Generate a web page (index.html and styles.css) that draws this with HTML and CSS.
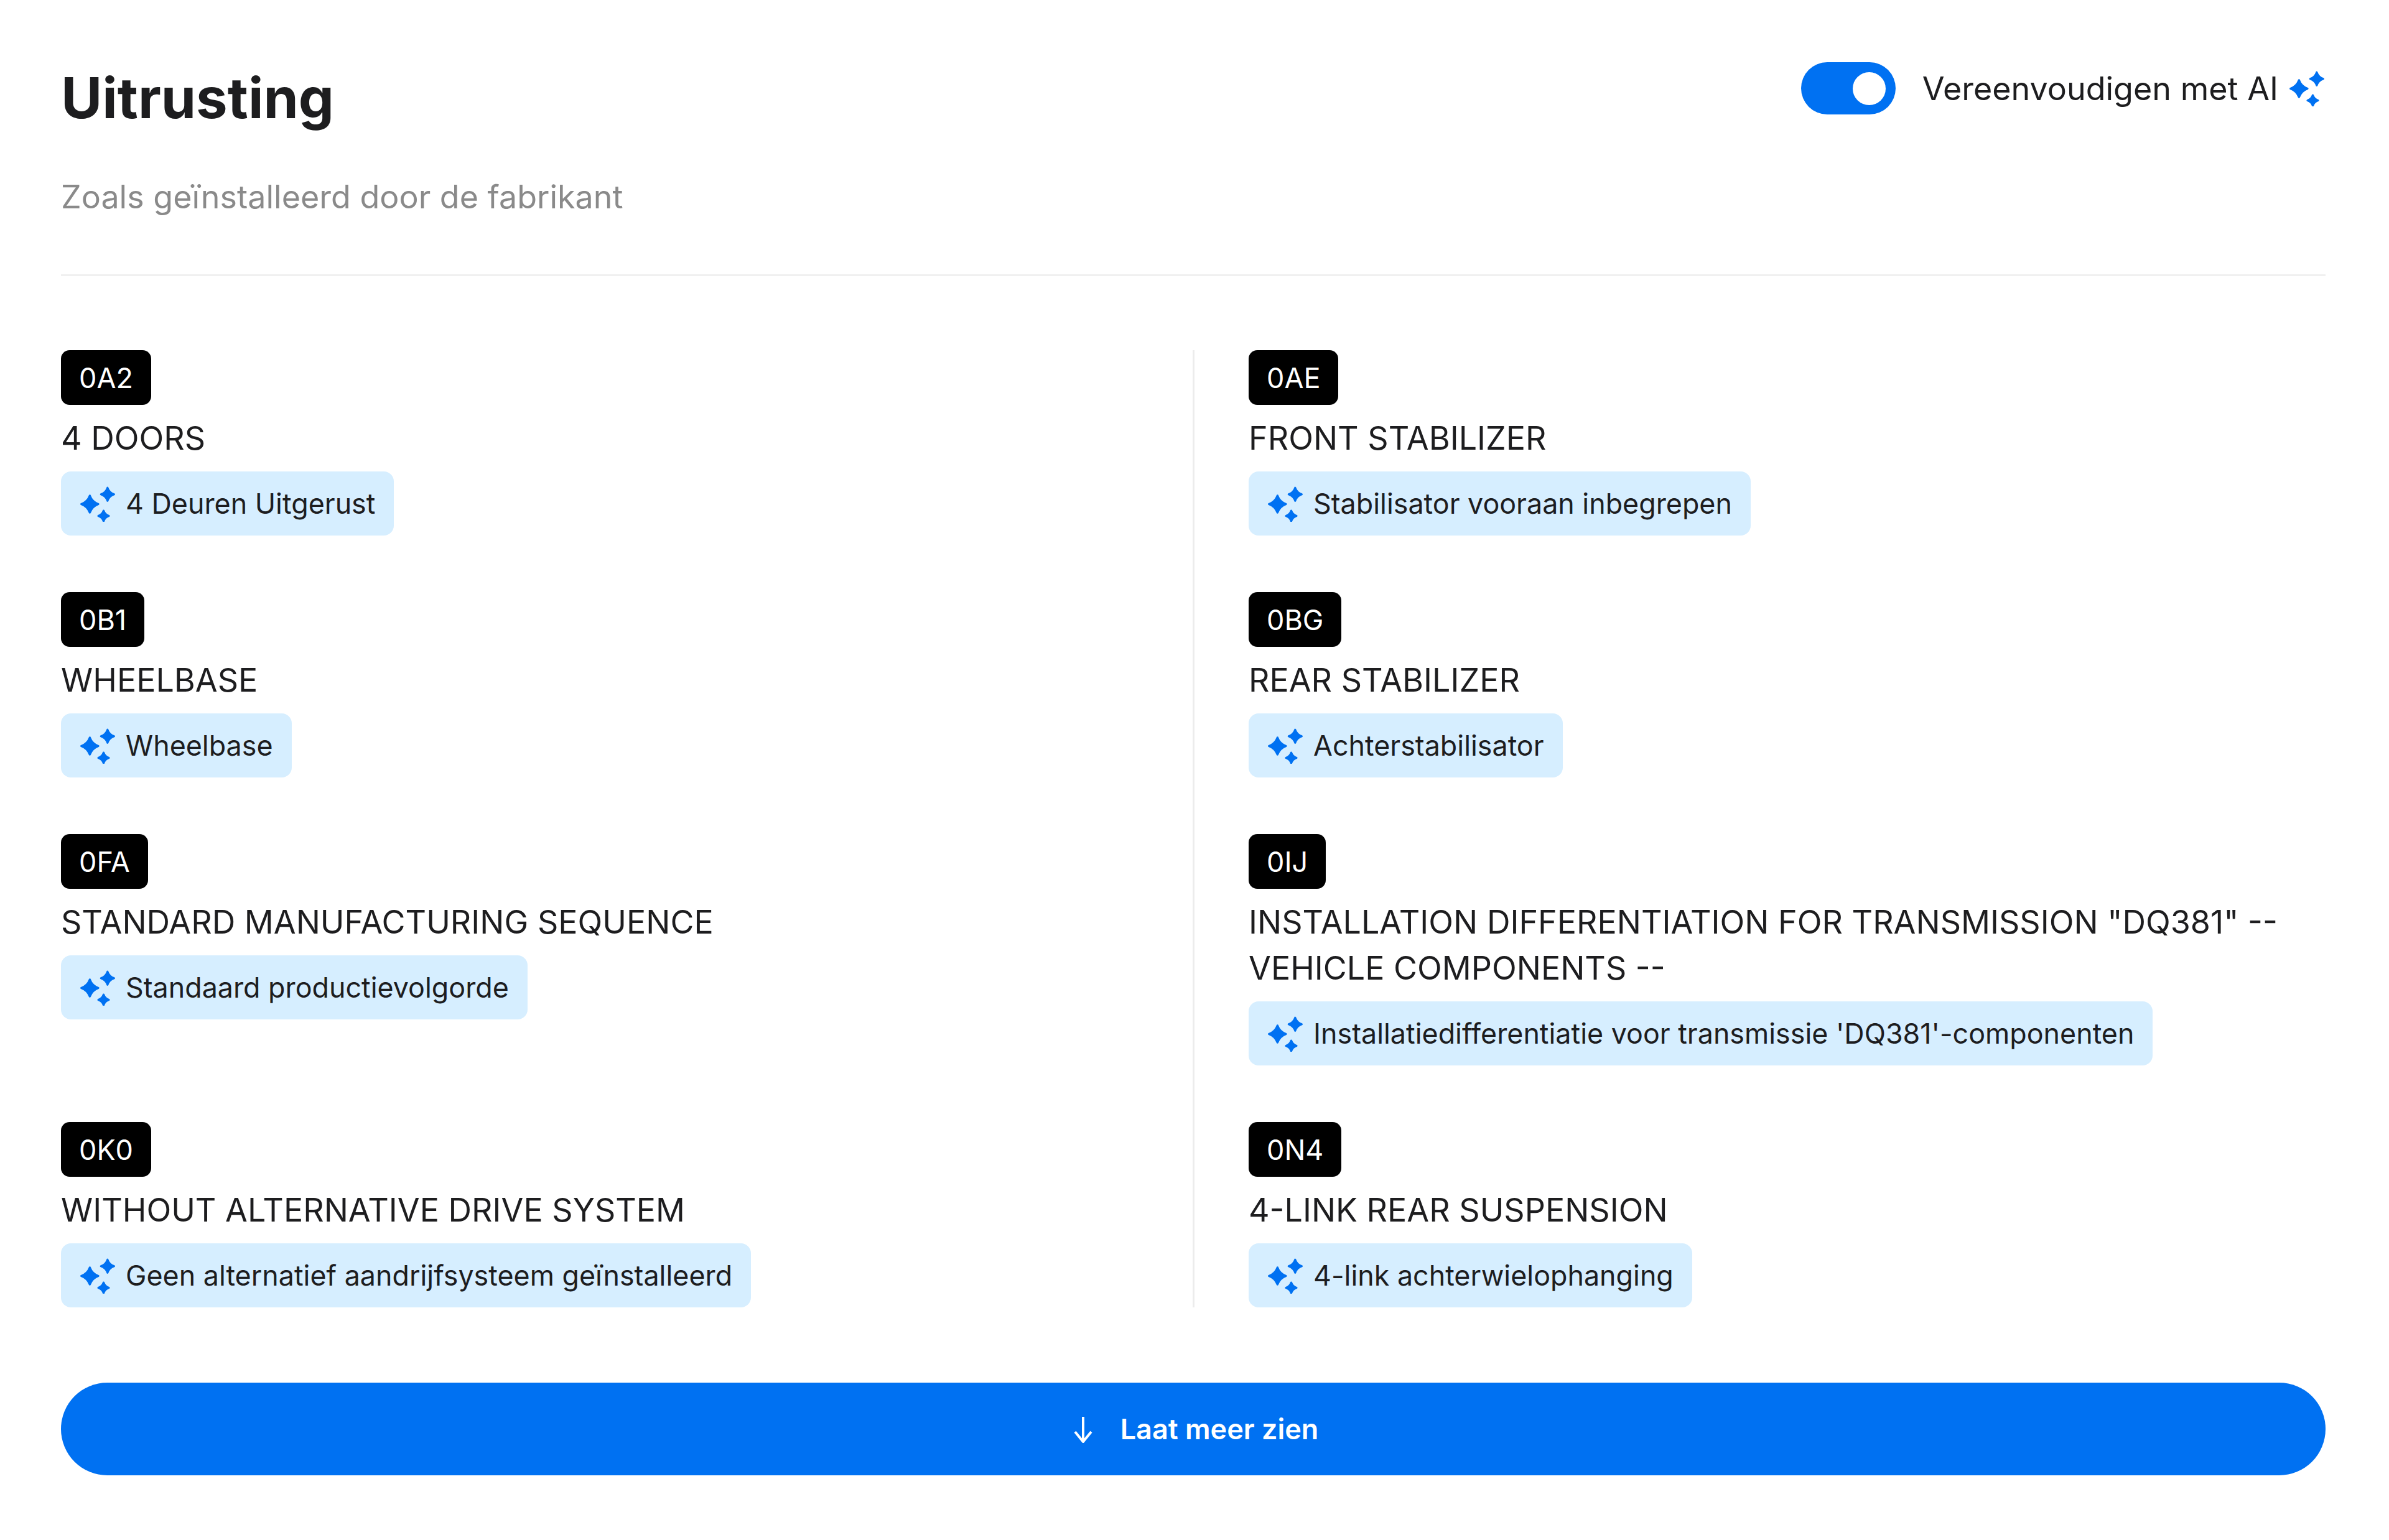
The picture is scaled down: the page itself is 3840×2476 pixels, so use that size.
FILE: index.html
```html
<!DOCTYPE html>
<html lang="nl">
<head>
   <meta charset="UTF-8">
   <meta name="viewport" content="width=device-width, initial-scale=1.0">
   <title>Uitrusting</title>
   <link rel="stylesheet" href="styles.css">
</head>
<body>
   <svg class="defs" width="0" height="0">
      <symbol id="sparkle" viewBox="0 0 54 55">
         <path d="M15 15 Q18.5 24.5 28 28 Q18.5 31.5 15 41 Q11.5 31.5 2 28 Q11.5 24.5 15 15Z"/>
         <path d="M42 3 Q44.5 10.5 52 13 Q44.5 15.5 42 23 Q39.5 15.5 32 13 Q39.5 10.5 42 3Z"/>
         <path d="M36 38 Q38 44 44 46 Q38 48 36 54 Q34 48 28 46 Q34 44 36 38Z"/>
      </symbol>
   </svg>

   <div class="container">
      <div class="header">
         <div class="heading">
            <h1>Uitrusting</h1>
            <p class="subtitle">Zoals geïnstalleerd door de fabrikant</p>
         </div>
         <div class="ai-toggle">
            <span class="switch"><span class="knob"></span></span>
            <span class="ai-label">Vereenvoudigen met AI</span>
            <svg class="sparkle"><use href="#sparkle"/></svg>
         </div>
      </div>

      <div class="items">
         <div class="item">
            <span class="code">0A2</span>
            <div class="name">4 DOORS</div>
            <div class="chip"><svg class="sparkle"><use href="#sparkle"/></svg>4 Deuren Uitgerust</div>
         </div>
         <div class="item">
            <span class="code">0AE</span>
            <div class="name">FRONT STABILIZER</div>
            <div class="chip"><svg class="sparkle"><use href="#sparkle"/></svg>Stabilisator vooraan inbegrepen</div>
         </div>
         <div class="item">
            <span class="code">0B1</span>
            <div class="name">WHEELBASE</div>
            <div class="chip"><svg class="sparkle"><use href="#sparkle"/></svg>Wheelbase</div>
         </div>
         <div class="item">
            <span class="code">0BG</span>
            <div class="name">REAR STABILIZER</div>
            <div class="chip"><svg class="sparkle"><use href="#sparkle"/></svg>Achterstabilisator</div>
         </div>
         <div class="item">
            <span class="code">0FA</span>
            <div class="name">STANDARD MANUFACTURING SEQUENCE</div>
            <div class="chip"><svg class="sparkle"><use href="#sparkle"/></svg>Standaard productievolgorde</div>
         </div>
         <div class="item">
            <span class="code">0IJ</span>
            <div class="name">INSTALLATION DIFFERENTIATION FOR TRANSMISSION "DQ381" -- VEHICLE COMPONENTS --</div>
            <div class="chip"><svg class="sparkle"><use href="#sparkle"/></svg>Installatiedifferentiatie voor transmissie 'DQ381'-componenten</div>
         </div>
         <div class="item">
            <span class="code">0K0</span>
            <div class="name">WITHOUT ALTERNATIVE DRIVE SYSTEM</div>
            <div class="chip"><svg class="sparkle"><use href="#sparkle"/></svg>Geen alternatief aandrijfsysteem geïnstalleerd</div>
         </div>
         <div class="item">
            <span class="code">0N4</span>
            <div class="name">4-LINK REAR SUSPENSION</div>
            <div class="chip"><svg class="sparkle"><use href="#sparkle"/></svg>4-link achterwielophanging</div>
         </div>
      </div>

      <button class="more">
         <svg class="arrow" viewBox="0 0 30 44"><path d="M15 2 V41 M2 26 L15 42 L28 26"/></svg>
         Laat meer zien
      </button>
   </div>
</body>
</html>
```

FILE: styles.css
```css
* {
   box-sizing: border-box;
}
body {
   margin: 0;
   background: #fff;
   color: #1d1d1f;
   font-family: Inter, "Noto Sans", sans-serif;
}
.defs {
   display: block;
   height: 0;
}
.container {
   padding: 100px 102px 105px 98px;
   display: flex;
   flex-direction: column;
}
.header {
   display: flex;
   justify-content: space-between;
   align-items: flex-start;
   height: 344px;
   border-bottom: 3px solid #f0f0f0;
}
h1 {
   margin: 0;
   font-size: 90.5px;
   line-height: 114px;
   font-weight: 700;
}
.subtitle {
   margin: 67px 0 0;
   font-size: 52px;
   line-height: 72px;
   color: #8a8a8a;
}
.ai-toggle {
   display: flex;
   align-items: center;
   margin-right: 1px;
}
.switch {
   width: 152px;
   height: 84px;
   border-radius: 42px;
   background: #0071f2;
   display: flex;
   align-items: center;
   justify-content: flex-end;
   padding-right: 16px;
}
.knob {
   width: 53px;
   height: 53px;
   border-radius: 50%;
   background: #fff;
}
.ai-label {
   margin-left: 43px;
   margin-right: 17px;
   font-size: 52px;
}
.sparkle {
   width: 58px;
   height: 58px;
   fill: #0071f2;
   stroke: #0071f2;
   stroke-width: 3;
   stroke-linejoin: round;
   flex-shrink: 0;
}
.items {
   position: relative;
   margin-top: 119px;
   display: grid;
   grid-template-columns: 1fr 1fr;
   column-gap: 178px;
   row-gap: 91px;
}
.items::before {
   content: "";
   position: absolute;
   left: 50%;
   top: 0;
   bottom: 0;
   width: 3px;
   margin-left: -1px;
   background: #ececec;
}
.item {
   display: flex;
   flex-direction: column;
   align-items: flex-start;
}
.code {
   height: 88px;
   padding: 0 29px;
   display: flex;
   align-items: center;
   border-radius: 14px;
   background: #000;
   color: #fff;
   font-size: 45px;
}
.name {
   margin-top: 17px;
   font-size: 52px;
   line-height: 74px;
}
.chip {
   margin-top: 16px;
   height: 103px;
   padding: 0 30px;
   display: flex;
   align-items: center;
   gap: 16px;
   border-radius: 16px;
   background: #d6eeff;
   color: #1d1d1f;
   font-size: 44.8px;
}
.more {
   margin-top: 121px;
   height: 149px;
   padding-left: 15px;
   border: 0;
   border-radius: 75px;
   background: #0071f2;
   color: #fff;
   font-family: inherit;
   font-size: 45px;
   font-weight: 600;
   display: flex;
   align-items: center;
   justify-content: center;
   gap: 45px;
}
.arrow {
   width: 30px;
   height: 44px;
   fill: none;
   stroke: #fff;
   stroke-width: 4;
}
```
